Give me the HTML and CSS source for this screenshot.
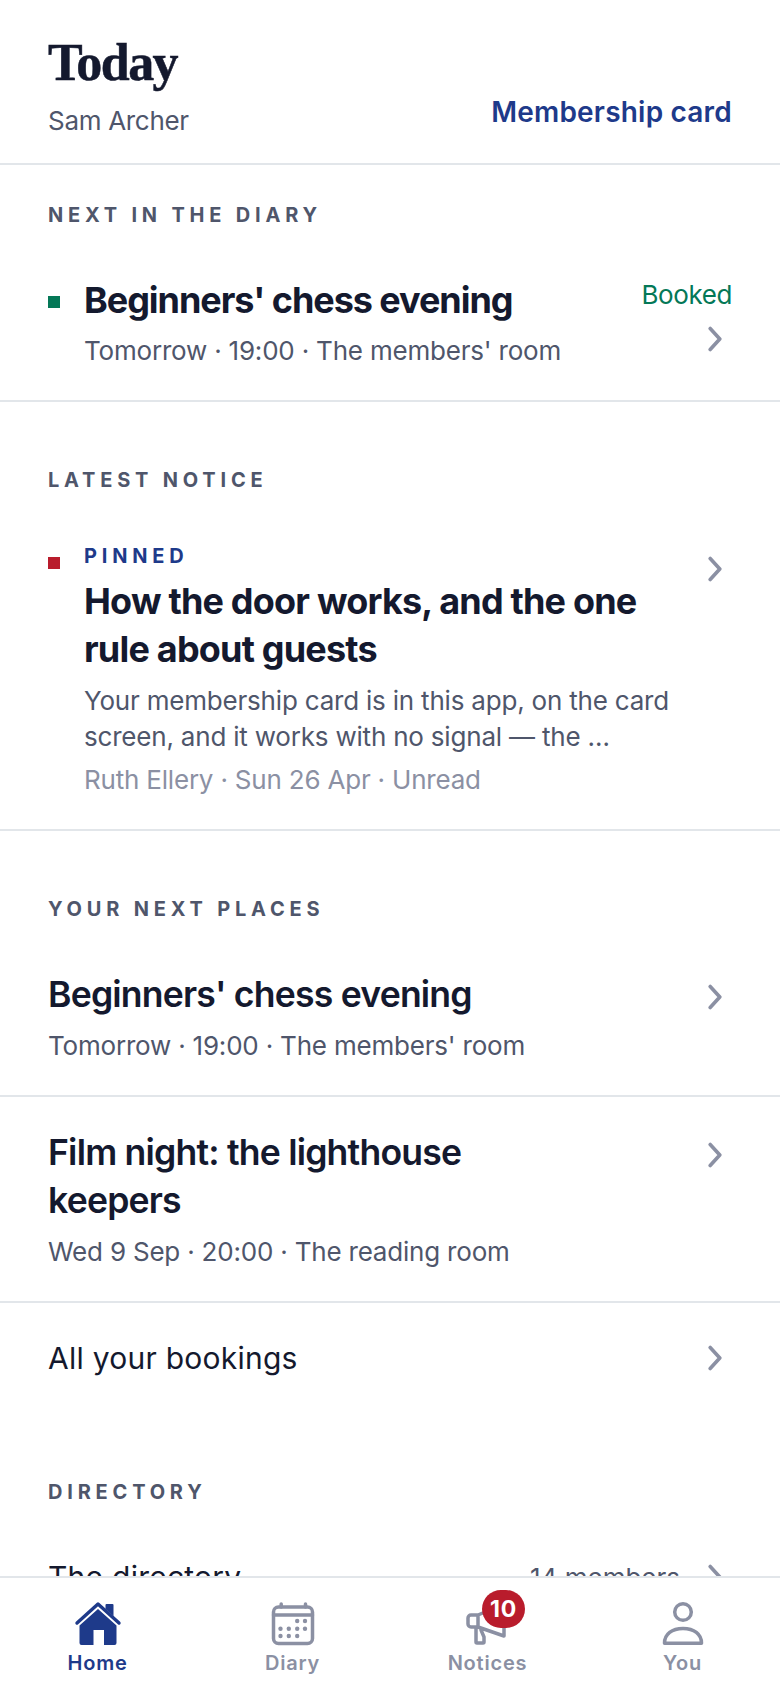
FILE: index.html
```html
<!DOCTYPE html>
<html lang="en">
<head>
<meta charset="utf-8">
<title>Today</title>
<link rel="stylesheet" href="styles.css">
</head>
<body>
<div class="app">
  <header class="head">
    <div>
      <h1 class="title">Today</h1>
      <div class="who">Sam Archer</div>
    </div>
    <a class="card-link">Membership card</a>
  </header>
  <main class="scroll">
    <section class="sec sec-first">
      <h2 class="label">NEXT IN THE DIARY</h2>
      <div class="row row-next">
        <span class="sq sq-green"></span>
        <div class="body">
          <div class="name">Beginners' chess evening</div>
          <div class="sub">Tomorrow · 19:00 · The members' room</div>
        </div>
        <div class="side">
          <span class="booked">Booked</span>
          <svg class="chev" viewBox="0 0 14 26"><path d="M2.200 2.500 11.800 13 2.200 23.500"/></svg>
        </div>
      </div>
    </section>
    <section class="sec">
      <h2 class="label">LATEST NOTICE</h2>
      <div class="row row-notice">
        <span class="sq sq-red"></span>
        <div class="body body-notice">
          <div class="pin">PINNED</div>
          <div class="name">How the door works, and the one rule about guests</div>
          <div class="excerpt">Your membership card is in this app, on the card screen, and it works with no signal — the …</div>
          <div class="meta">Ruth Ellery · Sun 26 Apr · Unread</div>
        </div>
        <svg class="chev chev-notice" viewBox="0 0 14 26"><path d="M2.200 2.500 11.800 13 2.200 23.500"/></svg>
      </div>
    </section>
    <section class="sec sec-places">
      <h2 class="label">YOUR NEXT PLACES</h2>
      <div class="row row-place">
        <div class="body">
          <div class="name">Beginners' chess evening</div>
          <div class="sub">Tomorrow · 19:00 · The members' room</div>
        </div>
        <svg class="chev" viewBox="0 0 14 26"><path d="M2.200 2.500 11.800 13 2.200 23.500"/></svg>
      </div>
      <div class="row row-place">
        <div class="body body-narrow">
          <div class="name">Film night: the lighthouse keepers</div>
          <div class="sub">Wed 9 Sep · 20:00 · The reading room</div>
        </div>
        <svg class="chev" viewBox="0 0 14 26"><path d="M2.200 2.500 11.800 13 2.200 23.500"/></svg>
      </div>
      <div class="row row-link">
        <div class="plain">All your bookings</div>
        <svg class="chev" viewBox="0 0 14 26"><path d="M2.200 2.500 11.800 13 2.200 23.500"/></svg>
      </div>
    </section>
    <section class="sec sec-dir">
      <h2 class="label">DIRECTORY</h2>
      <div class="row row-link row-dir">
        <div class="plain">The directory</div>
        <span class="count">14 members</span>
        <svg class="chev" viewBox="0 0 14 26"><path d="M2.200 2.500 11.800 13 2.200 23.500"/></svg>
      </div>
    </section>
  </main>
  <nav class="tabs">
    <a class="tab tab-on">
      <svg class="ico" viewBox="0 0 48 48"><path class="fill" d="M5.500 25.500 24 9l18.500 16.500V43a2 2 0 0 1-2 2H30V30H19.500v15H7.500a2 2 0 0 1-2-2z"/><path class="fill" d="M31.500 5a1 1 0 0 1 1-1h6a1 1 0 0 1 1 1v11l-8-7z"/><path class="roof" d="M3 23 24 4l21 19"/></svg>
      <span>Home</span>
    </a>
    <a class="tab">
      <svg class="ico" viewBox="0 0 48 48"><rect class="ln" x="4.500" y="7" width="39" height="36.500" rx="5"/><path class="ln" d="M4.500 15h39M12.200 4v3M36.500 4v3"/><g class="dots"><circle cx="28.200" cy="21" r="2.200"/><circle cx="36" cy="21" r="2.200"/><circle cx="11.500" cy="28.700" r="2.200"/><circle cx="19.800" cy="28.700" r="2.200"/><circle cx="28.200" cy="28.700" r="2.200"/><circle cx="36" cy="28.700" r="2.200"/><circle cx="11.500" cy="36" r="2.200"/><circle cx="19.800" cy="36" r="2.200"/><circle cx="28.200" cy="36" r="2.200"/></g></svg>
      <span>Diary</span>
    </a>
    <a class="tab">
      <span class="ico-wrap">
        <svg class="ico" viewBox="0 0 48 48"><path class="ln" d="M14 15H7a3 3 0 0 0-3 3v6a3 3 0 0 0 3 3h7zM14 15 40 4v32L14 27M12 27v15a1 1 0 0 0 1 1h6a1 1 0 0 0 1-1v-5l-3-7"/></svg>
        <span class="badge">10</span>
      </span>
      <span>Notices</span>
    </a>
    <a class="tab">
      <svg class="ico" viewBox="0 0 48 48"><circle class="ln" cx="24" cy="12" r="8.300"/><path class="ln" d="M5.500 43.200C5.500 34 13 28.500 24 28.500s18.500 5.500 18.500 14.700z"/></svg>
      <span>You</span>
    </a>
  </nav>
</div>
</body>
</html>
```
FILE: styles.css
```css
* { box-sizing: border-box; }
html, body { margin: 0; padding: 0; }
body { font-family: Inter, "Liberation Sans", sans-serif; color: #14192e; background: #fff; }
.app { width: 780px; height: 1688px; overflow: hidden; display: flex; flex-direction: column; }
.head { display: flex; justify-content: space-between; align-items: flex-end; padding: 36px 48px 24px; border-bottom: 2px solid #e2e6ea; height: 165px; flex: none; }
.title { margin: 0; font: 700 52px/56px "Liberation Serif", serif; letter-spacing: -.03em; -webkit-text-stroke: .5px #14192e; color: #14192e; }
.who { font-size: 26px; line-height: 36px; letter-spacing: -.3px; color: #4f566b; margin-top: 12px; }
.card-link { font-size: 28px; line-height: 36px; font-weight: 600; letter-spacing: .2px; color: #1e3a8a; margin-bottom: 9px; }
.scroll { flex: 1; min-height: 0; overflow: hidden; }
.label { margin: 0; font-size: 20px; line-height: 28px; font-weight: 700; letter-spacing: .24em; color: #4f566b; }
.sec { padding: 0 48px; margin-top: 64px; border-bottom: 2px solid #e2e6ea; }
.sec-first { margin-top: 0; padding-top: 36px; }
.row { display: flex; align-items: flex-start; }
.row-next { padding: 47px 0 31px; }
.row-notice { padding: 48px 0 31px; }
.sq { width: 12px; height: 12px; margin-top: 20px; margin-right: 24px; flex: none; }
.sq-green { background: #047857; }
.sq-red { background: #b91c2c; margin-top: 15px; }
.body { flex: 1; min-width: 0; }
.body-notice { padding-right: 20px; }
.body-narrow { padding-right: 130px; }
.name { font-size: 36px; line-height: 48px; font-weight: 700; letter-spacing: -1.05px; color: #14192e; }
.row-place .name { font-size: 35.600px; font-weight: 600; letter-spacing: -.8px; }
.sub, .excerpt, .meta { font-size: 26px; line-height: 36px; letter-spacing: -.2px; color: #4f566b; }
.sub { margin-top: 9px; }
.row-notice .name { margin-top: 7px; letter-spacing: -.8px; }
.excerpt { margin-top: 10px; }
.meta { color: #8b90a3; margin-top: 7px; }
.pin { font-size: 20px; line-height: 28px; font-weight: 700; letter-spacing: .24em; color: #1e3a8a; }
.side { display: flex; flex-direction: column; align-items: flex-end; margin-top: 1px; }
.booked { font-size: 26px; line-height: 36px; letter-spacing: -.4px; color: #047857; }
.chev { width: 14px; height: 26px; fill: none; stroke: #8b90a3; stroke-width: 3.600; stroke-linecap: round; stroke-linejoin: round; flex: none; margin: 13px 10px 0 0; }
.chev-notice { margin-top: 14px; }
.sec-places { border-bottom: 0; }
.row-place { padding: 48px 48px 31px; border-bottom: 2px solid #e2e6ea; margin: 0 -48px; }
.row-place + .row-place { padding-top: 32px; }
.row-link { padding: 35px 0 30px; align-items: center; }
.row-link .chev { margin-top: 0; }
.plain { flex: 1; font-size: 30px; line-height: 40px; letter-spacing: .25px; color: #14192e; }
.sec-dir { border-bottom: 0; margin-top: 70px; }
.row-dir { padding-top: 51px; }
.count { font-size: 26px; color: #4f566b; margin-right: 28px; }
.tabs { flex: none; height: 112px; display: grid; grid-template-columns: repeat(4, 1fr); border-top: 2px solid #e2e6ea; background: #fff; }
.tab { display: flex; flex-direction: column; align-items: center; padding-top: 22px; font-size: 20px; line-height: 28px; font-weight: 600; letter-spacing: .04em; color: #8b90a3; }
.tab-on { color: #1e3a8a; }
.ico { width: 48px; height: 48px; display: block; margin-bottom: 1px; }
.ico-wrap { position: relative; display: block; }
.fill { fill: #1e3a8a; }
.roof { fill: none; stroke: #1e3a8a; stroke-width: 3.400; stroke-linecap: round; stroke-linejoin: round; }
.ln { fill: none; stroke: #8b90a3; stroke-width: 3.500; stroke-linejoin: round; stroke-linecap: round; }
.dots { fill: #8b90a3; }
.badge { position: absolute; left: 18.500px; top: -10px; width: 43px; height: 38px; border-radius: 19px; background: #b91c2c; color: #fff; font-size: 23px; line-height: 38px; font-weight: 700; text-align: center; }
```
